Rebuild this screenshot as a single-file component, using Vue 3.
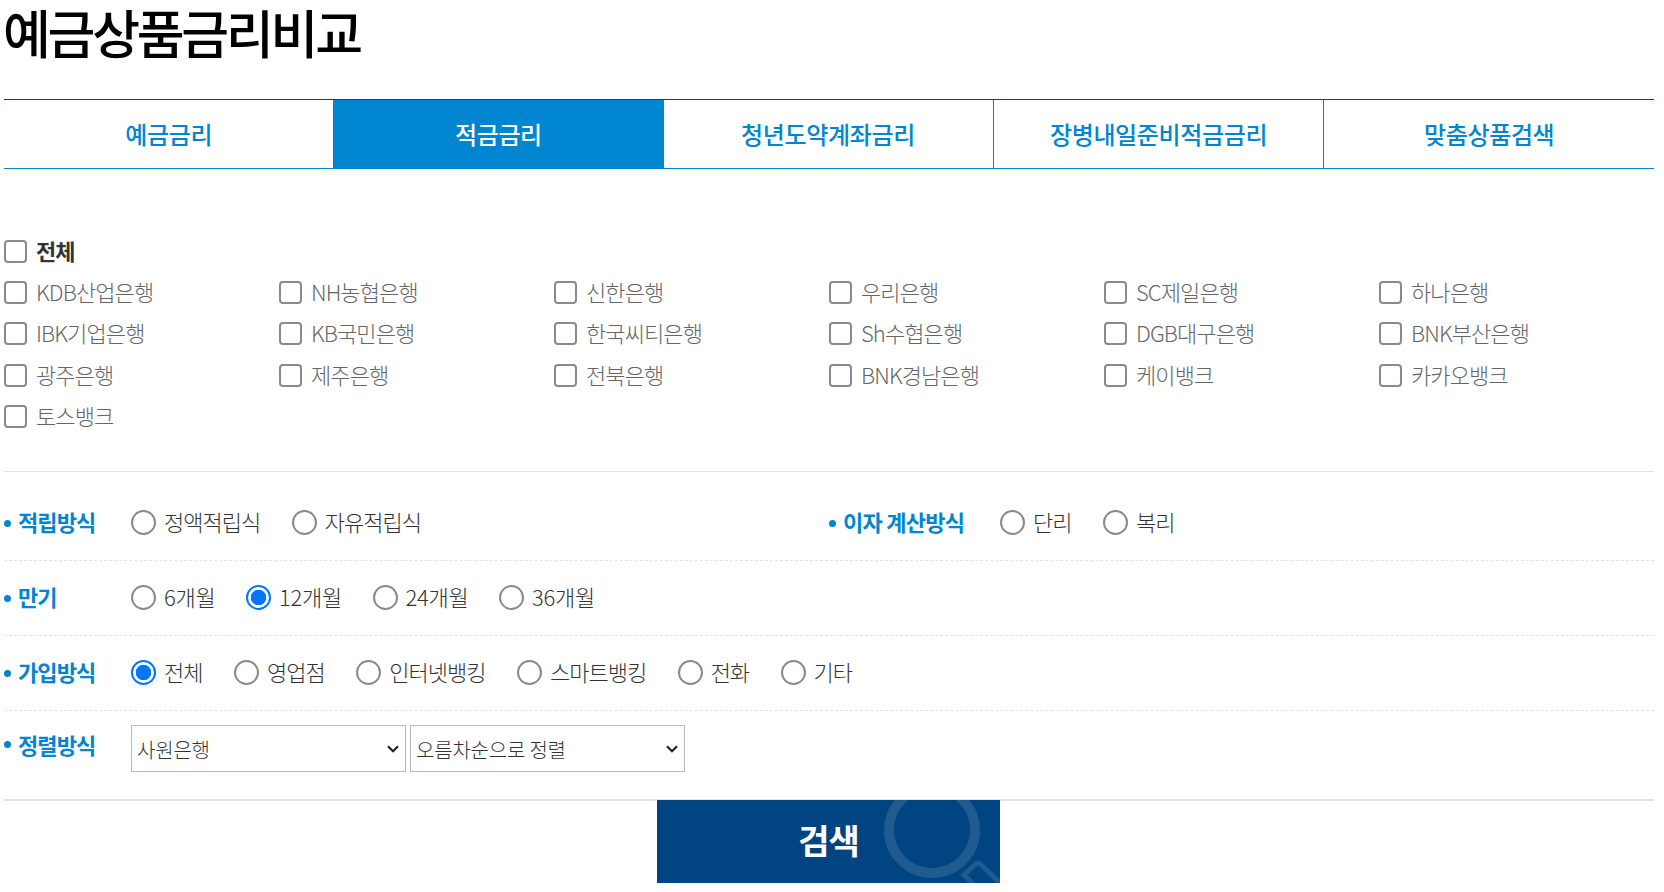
<script setup>
const tabs = ['예금금리', '적금금리', '청년도약계좌금리', '장병내일준비적금금리', '맞춤상품검색']
const banks = ['KDB산업은행','NH농협은행','신한은행','우리은행','SC제일은행','하나은행','IBK기업은행','KB국민은행','한국씨티은행','Sh수협은행','DGB대구은행','BNK부산은행','광주은행','제주은행','전북은행','BNK경남은행','케이뱅크','카카오뱅크','토스뱅크']
const term = [['6개월',false],['12개월',true],['24개월',false],['36개월',false]]
const join = [['전체',true],['영업점',false],['인터넷뱅킹',false],['스마트뱅킹',false],['전화',false],['기타',false]]
const selects = ['사원은행', '오름차순으로 정렬']
</script>

<template>
  <main class="page">
    <h1 class="title">예금상품금리비교</h1>
    <nav class="tabs">
      <a v-for="(t, i) in tabs" :key="t" class="tab" :class="{ active: i === 1 }">{{ t }}</a>
    </nav>

    <section class="banks">
      <label class="check all"><input type="checkbox" /><span>전체</span></label>
      <div class="bank-grid">
        <label v-for="b in banks" :key="b" class="check"><input type="checkbox" /><span>{{ b }}</span></label>
      </div>
    </section>

    <section class="row first">
      <div class="half">
        <b class="label">적립방식</b>
        <div class="opts">
          <label class="radio"><input type="radio" name="a" /><span>정액적립식</span></label>
          <label class="radio"><input type="radio" name="a" /><span>자유적립식</span></label>
        </div>
      </div>
      <div class="half second">
        <b class="label wide">이자 계산방식</b>
        <div class="opts">
          <label class="radio"><input type="radio" name="b" /><span>단리</span></label>
          <label class="radio"><input type="radio" name="b" /><span>복리</span></label>
        </div>
      </div>
    </section>
    <section class="row">
      <b class="label">만기</b>
      <div class="opts term">
        <label v-for="o in term" :key="o[0]" class="radio"><input type="radio" name="c" :checked="o[1]" /><span>{{ o[0] }}</span></label>
      </div>
    </section>
    <section class="row">
      <b class="label">가입방식</b>
      <div class="opts">
        <label v-for="o in join" :key="o[0]" class="radio"><input type="radio" name="d" :checked="o[1]" /><span>{{ o[0] }}</span></label>
      </div>
    </section>
    <section class="row sort">
      <b class="label">정렬방식</b>
      <div class="selects">
        <div v-for="s in selects" :key="s" class="select-wrap">
          <select><option>{{ s }}</option></select>
          <svg class="chevron" width="12" height="8" viewBox="0 0 12 8" fill="none" stroke="#222" stroke-width="2.2">
            <path d="M1 1.2 L6 6.2 L11 1.2" />
          </svg>
        </div>
      </div>
    </section>

    <button class="search">
      <svg class="glass" width="130" height="83" viewBox="0 0 130 83" fill="none" stroke="#1f5a91">
        <circle cx="62" cy="30" r="43" stroke-width="10" />
        <path d="M108 62 L94 75 L112 92 M108 62 L138 90" stroke-width="5" />
      </svg>
      <span>검색</span>
    </button>
  </main>
</template>

<style scoped>
.page {
  width: 1650px;
  margin-left: 4px;
  font-family: "Noto Sans CJK KR", "Noto Sans", sans-serif;
  color: #333;
}
.title {
  margin: 0 0 0 -1px;
  height: 99px;
  font-size: 52px;
  line-height: 64px;
  font-weight: 500;
  letter-spacing: -3.25px;
  color: #000;
  white-space: nowrap;
}
.tabs {
  display: flex;
  height: 68px;
  border-top: 1px solid #004481;
  border-bottom: 1px solid #0085d0;
}
.tab {
  flex: 1;
  display: flex;
  align-items: center;
  justify-content: center;
  padding-bottom: 2px;
  font-size: 24px;
  font-weight: 500;
  letter-spacing: -0.35px;
  color: #0085d0;
  border-left: 1px solid #0085d0;
}
.tab:first-child, .tab:nth-child(2), .tab:nth-child(3) { border-left: 0; }
.tab.active {
  background: #0085d0;
  color: #fff;
  box-shadow: -1px 0 0 #0085d0, 1px 0 0 #0085d0;
}
.banks {
  padding-top: 62px;
  height: 303px;
  box-sizing: border-box;
  border-bottom: 1px solid #e3e3e3;
}
.check {
  display: flex;
  align-items: center;
  height: 41.3px;
  font-size: 22px;
  letter-spacing: -0.9px;
  color: #666;
  font-weight: 300;
}
.check span { padding-bottom: 3px; }
.check.all {
  height: 41px;
  font-weight: 700;
  color: #333;
}
.check input {
  appearance: none;
  box-sizing: border-box;
  width: 23px;
  height: 23px;
  margin: 0 9px 0 0;
  flex: none;
  background: #fff;
  border: 2px solid #8a8a8a;
  border-radius: 4px;
}
.bank-grid {
  display: grid;
  grid-template-columns: repeat(6, 275px);
}
.row {
  display: flex;
  align-items: center;
  height: 75px;
  padding-bottom: 1px;
  border-bottom: 1px dashed #e3e3e3;
  box-sizing: border-box;
}
.row.first { height: 89px; padding: 13px 0 0; }
.half { display: flex; align-items: center; width: 825px; }
.half.second { width: auto; }
.label {
  flex: none;
  width: 127px;
  position: relative;
  padding-left: 14px;
  padding-bottom: 3px;
  box-sizing: border-box;
  font-size: 22px;
  font-weight: 700;
  letter-spacing: -0.9px;
  color: #0085d0;
}
.label::before {
  content: "";
  position: absolute;
  left: 0;
  top: 50%;
  width: 7px;
  height: 7px;
  margin-top: -3px;
  border-radius: 50%;
  background: #0085d0;
}
.label.wide { width: 171px; letter-spacing: -0.75px; }
.opts { display: flex; gap: 31.5px; }
.opts.term { gap: 30.7px; }
.radio {
  display: flex;
  align-items: center;
  font-size: 22px;
  letter-spacing: -1px;
  color: #333;
  font-weight: 300;
}
.radio span { padding-bottom: 3px; }
.term .radio { letter-spacing: -0.3px; }
.radio input {
  appearance: none;
  box-sizing: border-box;
  width: 25px;
  height: 25px;
  margin: 0 8px 0 0;
  flex: none;
  background: #fff;
  border: 2px solid #8a8a8a;
  border-radius: 50%;
}
.radio input:checked {
  border-color: #0075ff;
  background: radial-gradient(circle, #0075ff 0, #0075ff 7.5px, #fff 8px);
}
.row.sort {
  height: 90px;
  border-bottom: 2px solid #e3e3e3;
  align-items: flex-start;
  padding: 14px 0 0;
}
.sort .label { line-height: 38px; padding-bottom: 0; }
.selects { display: flex; gap: 4px; }
.select-wrap { position: relative; width: 275px; height: 47px; }
select {
  appearance: none;
  box-sizing: border-box;
  display: block;
  width: 100%;
  height: 100%;
  font-family: inherit;
  font-size: 20px;
  font-weight: 300;
  letter-spacing: -0.2px;
  color: #333;
  background: #fff;
  border: 1px solid #bbb;
  padding: 1px 0 0 5px;
  border-radius: 0;
}
.chevron {
  position: absolute;
  right: 7px;
  top: 20px;
  pointer-events: none;
}
.search {
  display: flex;
  align-items: center;
  justify-content: center;
  position: relative;
  overflow: hidden;
  width: 343px;
  height: 83px;
  margin: -1px 0 0 653px;
  padding: 0 0 5px;
  border: 0;
  background: #004481;
  color: #fff;
  font-family: inherit;
  font-size: 34px;
  font-weight: 700;
  letter-spacing: -1px;
}
.search span { position: relative; }
.glass {
  position: absolute;
  right: 0;
  top: 0;
}
</style>

<style>
body { background: #fff; }
</style>
